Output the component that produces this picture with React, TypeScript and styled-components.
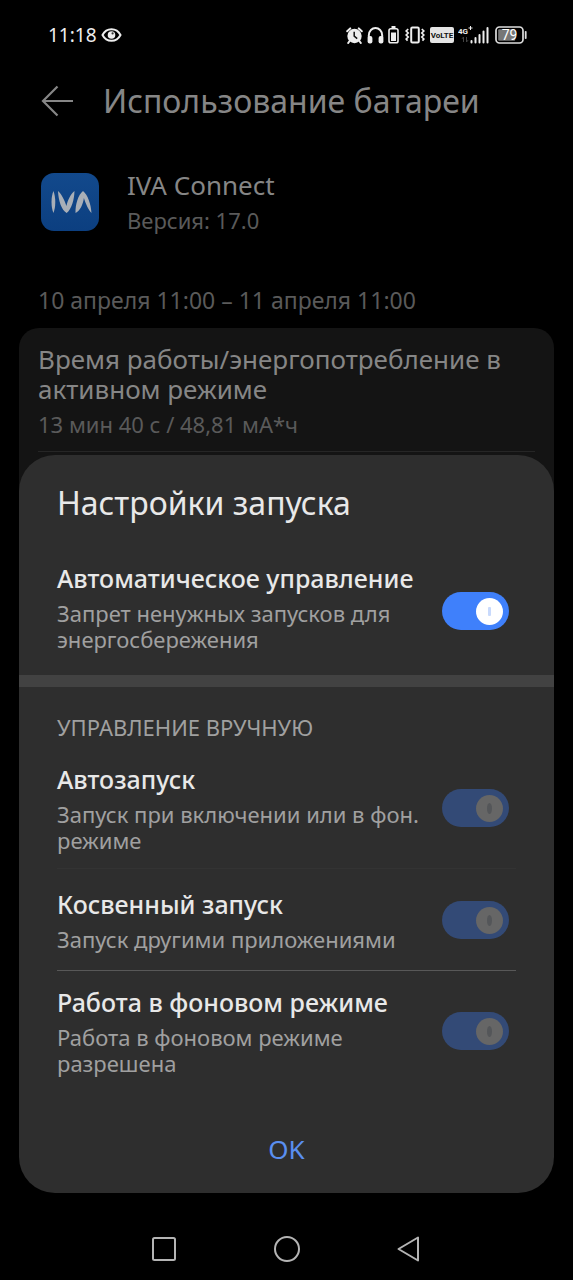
import React, { useState } from "react";
import styled, { createGlobalStyle } from "styled-components";

const GlobalStyle = createGlobalStyle`
  *, *::before, *::after { box-sizing: border-box; }
  body {
    margin: 0;
    background: #000;
    font-family: "Noto Sans", Roboto, sans-serif;
  }
  h1, h2, h3, p { margin: 0; font-weight: 400; }
  svg { display: block; }
`;

const Screen = styled.div`
  position: relative;
  display: flex;
  flex-direction: column;
  min-height: 100vh;
  background: #000;
`;

const StatusBar = styled.header`
  display: flex;
  align-items: center;
  justify-content: space-between;
  height: 70px;
  padding: 0 46px 0 48px;
  color: #eee;
`;

const StatusGroup = styled.div`
  display: flex;
  align-items: center;
  gap: 4px;
`;

const Time = styled.time`
  font-size: 19px;
  line-height: 24px;
`;

const Page = styled.main`
  flex: 1;
`;

const TitleBar = styled.div`
  display: flex;
  align-items: center;
  gap: 29px;
  height: 62px;
  padding: 0 41px;
  color: #868686;
`;

const IconButton = styled.button`
  display: flex;
  align-items: center;
  justify-content: center;
  padding: 0;
  border: 0;
  background: none;
  color: inherit;
  cursor: pointer;
`;

const PageTitle = styled.h1`
  font-size: 32px;
  line-height: 44px;
  white-space: nowrap;
`;

const AppInfo = styled.section`
  display: flex;
  align-items: center;
  gap: 28px;
  padding: 35px 41px 0;
`;

const AppName = styled.h2`
  color: #868686;
  font-size: 26px;
  line-height: 36px;
`;

const Muted = styled.p`
  color: #5a5a5a;
  font-size: 22px;
  line-height: 34px;
`;

const Period = styled.p`
  padding: 48px 38px 13px;
  color: #5a5a5a;
  font-size: 23px;
  line-height: 30px;
`;

const UsageCard = styled.section`
  margin: 0 19px;
  padding: 16px 19px 80px;
  border-radius: 20px;
  background: #141414;
`;

const UsageRow = styled.div`
  padding-bottom: 10px;
  border-bottom: 1px solid #262626;
`;

const UsageTitle = styled.h3`
  padding-bottom: 3px;
  color: #868686;
  font-size: 26px;
  line-height: 30px;
`;

const Sheet = styled.section`
  position: absolute;
  left: 19px;
  right: 19px;
  bottom: 87px;
  padding-top: 24px;
  border-radius: 36px;
  background: #2e2e2e;
`;

const SheetTitle = styled.h2`
  padding: 0 38px 20px;
  color: #e8e8e8;
  font-size: 32px;
  line-height: 48px;
`;

const RowText = styled.div`
  flex: 1;
  min-width: 0;
`;

const Group = styled.div<{ $banded?: boolean }>`
  padding: 0 38px;
  border-bottom: ${(p) => (p.$banded ? "12px solid #424242" : "0")};

  ${RowText} {
    padding-bottom: ${(p) => (p.$banded ? "10px" : "2px")};
  }
`;

const GroupLabel = styled.h3`
  padding: 25px 0 6px;
  color: #a0a0a0;
  font-size: 22px;
  line-height: 30px;
`;

const Row = styled.div<{ $line?: string }>`
  display: flex;
  align-items: center;
  justify-content: space-between;
  gap: 14px;
  min-height: 102px;
  padding: 13px 7px 13px 0;
  border-bottom: ${(p) => (p.$line ? `1px solid ${p.$line}` : "0")};
`;

const RowTitle = styled.label`
  display: block;
  padding-bottom: 4px;
  color: #e8e8e8;
  font-size: 25px;
  font-weight: 500;
  line-height: 36px;
`;

const RowHint = styled.p`
  color: #a0a0a0;
  font-size: 22px;
  line-height: 26px;
`;

const Switch = styled.input`
  appearance: none;
  position: relative;
  flex: none;
  width: 67px;
  height: 38px;
  margin: 0;
  border-radius: 19px;
  background: #5a5a5a;
  cursor: pointer;

  &::before {
    content: "";
    position: absolute;
    top: 6px;
    left: 6px;
    width: 27px;
    height: 27px;
    border-radius: 50%;
    background: #fff;
  }
  &::after {
    content: "";
    position: absolute;
    top: 15px;
    left: 18px;
    width: 3px;
    height: 9px;
    border-radius: 1px;
    background: #c9dafc;
  }
  &:checked { background: #3f80fb; }
  &:checked::before { left: 34px; }
  &:checked::after { left: 46px; }
  &:disabled { background: #334a76; cursor: default; }
  &:disabled::before { background: #666; }
  &:disabled::after { left: 45px; top: 14px; width: 5px; height: 11px; border-radius: 50%; background: #545659; }
`;

const ConfirmButton = styled.button`
  display: block;
  width: 100%;
  padding: 38px 0 24px;
  border: 0;
  background: none;
  color: #5a8ff0;
  font: inherit;
  font-size: 26px;
  line-height: 40px;
  cursor: pointer;
`;

const NavBar = styled.nav`
  display: flex;
  align-items: center;
  justify-content: center;
  gap: 97px;
  height: 62px;
  color: #b4b4b4;
`;

const EyeIcon = () => (
  <svg width="21" height="16" viewBox="0 0 21 16" fill="none">
    <path d="M1.5 8C5.5 .2 15.5 .2 19.5 8C15.5 15.8 5.5 15.8 1.5 8Z" stroke="#eee" strokeWidth="2" />
    <circle cx="10.5" cy="8" r="3.8" fill="#eee" />
    <circle cx="11.6" cy="6.4" r="1.1" fill="#333" />
  </svg>
);

const AlarmIcon = () => (
  <svg width="17" height="17" viewBox="0 0 17 17" fill="none">
    <circle cx="8.5" cy="9" r="7.2" fill="#eee" />
    <path d="M1.2 4.2L4.2 1.4M15.8 4.2L12.8 1.4M3.6 14L2.2 16M13.4 14L14.8 16" stroke="#eee" strokeWidth="2" strokeLinecap="round" />
    <path d="M8.2 4.8V9.2L11.2 11.6" stroke="#111" strokeWidth="1.5" />
  </svg>
);

const HeadphonesIcon = () => (
  <svg width="17" height="18" viewBox="0 0 17 18" fill="none">
    <path d="M1.8 12V9.5C1.8 -.4 15.2 -.4 15.2 9.5V12" stroke="#eee" strokeWidth="2" />
    <rect x=".6" y="10" width="4.8" height="7.4" rx="2" fill="#eee" />
    <rect x="11.6" y="10" width="4.8" height="7.4" rx="2" fill="#eee" />
  </svg>
);

const SmallBatteryIcon = () => (
  <svg width="11" height="18" viewBox="0 0 11 18" fill="none">
    <rect x="3.5" y="0" width="4" height="2.5" fill="#eee" />
    <rect x="1" y="2.8" width="9" height="14" rx="1.8" stroke="#eee" strokeWidth="1.6" />
    <rect x="3" y="6.5" width="5" height="8.5" fill="#eee" />
  </svg>
);

const VibrateIcon = () => (
  <svg width="23" height="18" viewBox="-2 0 23 18" fill="none" stroke="#eee">
    <rect x="6.2" y="1.5" width="7.6" height="15" rx="1.2" strokeWidth="2" />
    <path d="M3.2 3L1.2 5L3.2 7L1.2 9L3.2 11L1.2 13L2.6 14.6" strokeWidth="1.7" />
    <path d="M16.8 3L18.8 5L16.8 7L18.8 9L16.8 11L18.8 13L17.4 14.6" strokeWidth="1.7" />
  </svg>
);

const VolteIcon = () => (
  <svg width="24" height="16" viewBox="0 0 24 16">
    <rect width="24" height="16" rx="2" fill="#e4e4e4" />
    <text x="12" y="11" textAnchor="middle" fontFamily="Roboto, sans-serif" fontWeight="700" fontSize="8" fill="#111">
      VoLTE
    </text>
  </svg>
);

const SignalIcon = () => (
  <svg width="31" height="18" viewBox="0 0 31 18">
    <text x="0" y="8" fontFamily="Roboto, sans-serif" fontWeight="700" fontSize="8" fill="#eee">
      4G
    </text>
    <path d="M12.5 0V4M10.5 2H14.5" stroke="#eee" />
    <path d="M5.5 16V11L4 12.8M8.5 11V16L10 14.2" stroke="#444" fill="none" />
    <path d="M13.5 16.5V15M17.5 16.5V12M21.5 16.5V9M25.5 16.5V5.5M29.5 16.5V2" stroke="#eee" strokeWidth="2" strokeLinecap="round" />
  </svg>
);

const BatteryIcon = () => (
  <svg width="34" height="18" viewBox="-2 0 34 18">
    <rect x="1" y="1" width="27" height="16" rx="3.5" fill="none" stroke="#ddd" strokeWidth="1.7" />
    <rect x="3.2" y="3.2" width="17" height="11.6" rx="1" fill="#777" />
    <rect x="29.8" y="5" width="1.8" height="8" rx=".8" fill="#ddd" />
    <text x="14.5" y="14" textAnchor="middle" fontFamily="Roboto, sans-serif" fontWeight="400" fontSize="14" fill="#fff">
      79
    </text>
  </svg>
);

const BackArrow = () => (
  <svg width="33" height="32" viewBox="0 0 33 32" fill="none" stroke="currentColor" strokeWidth="2.2">
    <path d="M32 16H2.5M16.5 1.5L2 16L16.5 30.5" />
  </svg>
);

const AppLogo = () => (
  <svg width="58" height="58" viewBox="0 0 58 58" role="img" aria-label="IVA">
    <defs>
      <linearGradient id="logo-blue" x1="0" y1="0" x2="0" y2="1">
        <stop offset="0" stopColor="#12498c" />
        <stop offset="1" stopColor="#0c3f80" />
      </linearGradient>
    </defs>
    <rect width="58" height="58" rx="13" fill="url(#logo-blue)" />
    <g fill="#a9afb7">
      <path d="M12.4 18C14.9 24 14.9 34 12.4 40C9.9 34 9.9 24 12.4 18Z" />
      <path d="M17 18C20.5 21 23.6 27 25.4 33C26.8 27 29.6 21 33.5 18C33.2 27 30.5 36.5 25.6 40C20.5 37 17.5 28 17 18Z" />
      <path d="M34.5 40C34.3 31 37.2 22 42 18C46.8 22 50 31 50.5 40C47.5 37 44.8 31 42.9 25C42 31.5 39 38 34.5 40Z" />
    </g>
  </svg>
);

const NavSquare = () => (
  <svg width="26" height="26" viewBox="0 0 26 26" fill="none" stroke="currentColor" strokeWidth="2">
    <rect x="2" y="2" width="22" height="22" rx="1.5" />
  </svg>
);

const NavCircle = () => (
  <svg width="26" height="26" viewBox="0 0 26 26" fill="none" stroke="currentColor" strokeWidth="2">
    <circle cx="13" cy="13" r="12" />
  </svg>
);

const NavTriangle = () => (
  <svg width="26" height="26" viewBox="0 0 26 26" fill="none" stroke="currentColor" strokeWidth="2" strokeLinejoin="round">
    <path d="M21 1.5V24.5L1.5 13Z" />
  </svg>
);

type SettingProps = {
  id: string;
  title: string;
  hint: string;
  checked: boolean;
  disabled?: boolean;
  line?: string;
  onChange?: (value: boolean) => void;
};

const Setting = ({ id, title, hint, checked, disabled, line, onChange }: SettingProps) => (
  <Row $line={line}>
    <RowText>
      <RowTitle htmlFor={id}>{title}</RowTitle>
      <RowHint id={`${id}-hint`}>{hint}</RowHint>
    </RowText>
    <Switch
      id={id}
      type="checkbox"
      role="switch"
      aria-describedby={`${id}-hint`}
      checked={checked}
      disabled={disabled}
      onChange={(e) => onChange?.(e.target.checked)}
    />
  </Row>
);

export default function App() {
  const [automatic, setAutomatic] = useState(true);

  return (
    <>
      <GlobalStyle />
      <Screen>
        <StatusBar>
          <StatusGroup>
            <Time>11:18</Time>
            <EyeIcon />
          </StatusGroup>
          <StatusGroup>
            <AlarmIcon />
            <HeadphonesIcon />
            <SmallBatteryIcon />
            <VibrateIcon />
            <VolteIcon />
            <SignalIcon />
            <BatteryIcon />
          </StatusGroup>
        </StatusBar>

        <Page>
          <TitleBar>
            <IconButton type="button" aria-label="Назад">
              <BackArrow />
            </IconButton>
            <PageTitle>Использование батареи</PageTitle>
          </TitleBar>
          <AppInfo>
            <AppLogo />
            <div>
              <AppName>IVA Connect</AppName>
              <Muted>Версия: 17.0</Muted>
            </div>
          </AppInfo>
          <Period>10 апреля 11:00 – 11 апреля 11:00</Period>
          <UsageCard>
            <UsageRow>
              <UsageTitle>Время работы/энергопотребление в активном режиме</UsageTitle>
              <Muted>13 мин 40 с / 48,81 мА*ч</Muted>
            </UsageRow>
          </UsageCard>
        </Page>

        <NavBar>
          <IconButton type="button" aria-label="Недавние">
            <NavSquare />
          </IconButton>
          <IconButton type="button" aria-label="Домой">
            <NavCircle />
          </IconButton>
          <IconButton type="button" aria-label="Назад">
            <NavTriangle />
          </IconButton>
        </NavBar>

        <Sheet role="dialog" aria-labelledby="sheet-title">
          <SheetTitle id="sheet-title">Настройки запуска</SheetTitle>
          <Group $banded>
            <Setting
              id="automatic"
              title="Автоматическое управление"
              hint="Запрет ненужных запусков для энергосбережения"
              checked={automatic}
              onChange={setAutomatic}
            />
          </Group>
          <Group>
            <GroupLabel>УПРАВЛЕНИЕ ВРУЧНУЮ</GroupLabel>
            <Setting
              id="autostart"
              title="Автозапуск"
              hint="Запуск при включении или в фон. режиме"
              checked
              disabled={automatic}
              line="#333333"
            />
            <Setting
              id="indirect"
              title="Косвенный запуск"
              hint="Запуск другими приложениями"
              checked
              disabled={automatic}
              line="#585858"
            />
            <Setting
              id="background"
              title="Работа в фоновом режиме"
              hint="Работа в фоновом режиме разрешена"
              checked
              disabled={automatic}
            />
          </Group>
          <ConfirmButton type="button">OK</ConfirmButton>
        </Sheet>
      </Screen>
    </>
  );
}
